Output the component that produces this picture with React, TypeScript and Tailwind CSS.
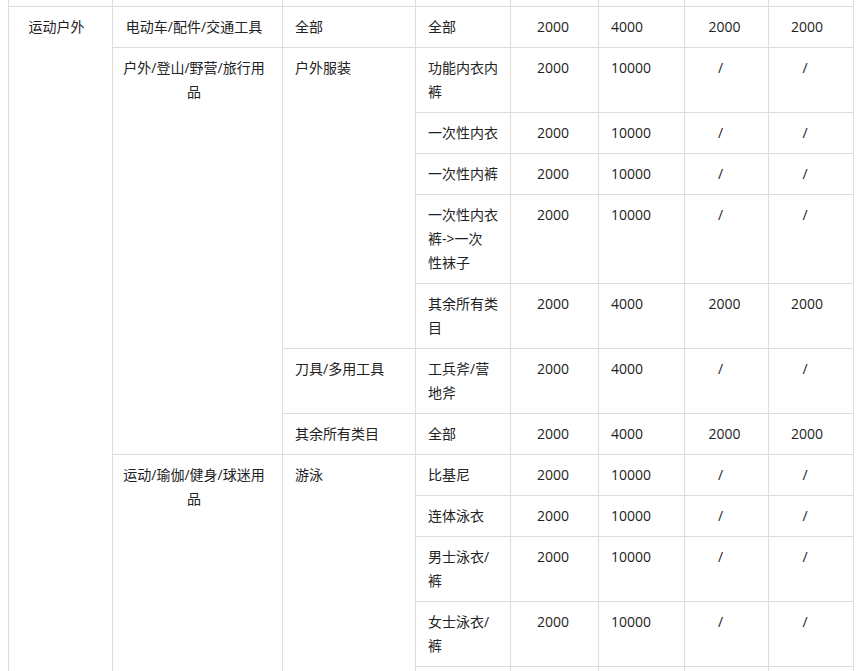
import React from 'react'

const td = 'border border-[#dddddd] align-top py-2'
const c1 = `${td} pl-[9px] pr-[17px] text-center`
const c2 = `${td} pl-[9px] pr-[16px] text-center`
const c3 = `${td} px-3 text-left`
const c4 = `${td} pl-3 pr-2 text-left`
const c5 = `${td} pl-2 pr-[11px] text-center`
const c6 = `${td} px-3 text-left`
const c7 = `${td} pl-3 pr-4 text-center`
const c7slash = `${td} pl-3 pr-6 text-center`
const c8 = `${td} pl-3 pr-5 text-center`
const c8slash = `${td} pl-3 pr-6 text-center`

function Limits({ base, max, p3, p4 }: { base: string; max: string; p3: string; p4: string }) {
  return (
    <>
      <td className={c5}>{base}</td>
      <td className={c6}>{max}</td>
      <td className={p3 === '/' ? c7slash : c7}>{p3}</td>
      <td className={p4 === '/' ? c8slash : c8}>{p4}</td>
    </>
  )
}

function Lines({ items }: { items: string[] }) {
  return (
    <>
      {items.map((t, i) => (
        <span key={i} className="block whitespace-nowrap">{t}</span>
      ))}
    </>
  )
}

export default function App() {
  return (
    <div className="h-[671px] w-[861px] overflow-hidden bg-white">
      <table className="ml-2 w-[845px] table-fixed border-collapse text-[14px] leading-6 text-[#222222] font-['Open_Sans','Noto_Sans_CJK_SC',sans-serif]">
        <colgroup>
          <col className="w-[104px]" />
          <col className="w-[170px]" />
          <col className="w-[133px]" />
          <col className="w-[95px]" />
          <col className="w-[88px]" />
          <col className="w-[86px]" />
          <col className="w-[84px]" />
          <col className="w-[85px]" />
        </colgroup>
        <tbody>
          {/* tail of the previous group, cut off at the top */}
          <tr>
            <td className="h-[6px] border-x border-[#dddddd] p-0" />
            <td className="h-[6px] border-x border-[#dddddd] p-0" />
            <td className="h-[6px] border-x border-[#dddddd] p-0" />
            <td className="h-[6px] border-x border-[#dddddd] p-0" />
            <td className="h-[6px] border-x border-[#dddddd] p-0" />
            <td className="h-[6px] border-x border-[#dddddd] p-0" />
            <td className="h-[6px] border-x border-[#dddddd] p-0" />
            <td className="h-[6px] border-x border-[#dddddd] p-0" />
          </tr>

          <tr>
            <td className={c1} rowSpan={13}>运动户外</td>
            <td className={c2}>电动车/配件/交通工具</td>
            <td className={c3}>全部</td>
            <td className={c4}>全部</td>
            <Limits base="2000" max="4000" p3="2000" p4="2000" />
          </tr>

          {/* 户外/登山/野营/旅行用品 */}
          <tr>
            <td className={c2} rowSpan={7}>
              <Lines items={['户外/登山/野营/旅行用', '品']} />
            </td>
            <td className={c3} rowSpan={5}>户外服装</td>
            <td className={c4}>
              <Lines items={['功能内衣内', '裤']} />
            </td>
            <Limits base="2000" max="10000" p3="/" p4="/" />
          </tr>
          <tr>
            <td className={c4}>一次性内衣</td>
            <Limits base="2000" max="10000" p3="/" p4="/" />
          </tr>
          <tr>
            <td className={c4}>一次性内裤</td>
            <Limits base="2000" max="10000" p3="/" p4="/" />
          </tr>
          <tr>
            <td className={c4}>
              <Lines items={['一次性内衣', '裤->一次', '性袜子']} />
            </td>
            <Limits base="2000" max="10000" p3="/" p4="/" />
          </tr>
          <tr>
            <td className={c4}>
              <Lines items={['其余所有类', '目']} />
            </td>
            <Limits base="2000" max="4000" p3="2000" p4="2000" />
          </tr>
          <tr>
            <td className={c3}>刀具/多用工具</td>
            <td className={c4}>
              <Lines items={['工兵斧/营', '地斧']} />
            </td>
            <Limits base="2000" max="4000" p3="/" p4="/" />
          </tr>
          <tr>
            <td className={c3}>其余所有类目</td>
            <td className={c4}>全部</td>
            <Limits base="2000" max="4000" p3="2000" p4="2000" />
          </tr>

          {/* 运动/瑜伽/健身/球迷用品 */}
          <tr>
            <td className={c2} rowSpan={5}>
              <Lines items={['运动/瑜伽/健身/球迷用', '品']} />
            </td>
            <td className={c3} rowSpan={5}>游泳</td>
            <td className={c4}>比基尼</td>
            <Limits base="2000" max="10000" p3="/" p4="/" />
          </tr>
          <tr>
            <td className={c4}>连体泳衣</td>
            <Limits base="2000" max="10000" p3="/" p4="/" />
          </tr>
          <tr>
            <td className={c4}>
              <Lines items={['男士泳衣/', '裤']} />
            </td>
            <Limits base="2000" max="10000" p3="/" p4="/" />
          </tr>
          <tr>
            <td className={c4}>
              <Lines items={['女士泳衣/', '裤']} />
            </td>
            <Limits base="2000" max="10000" p3="/" p4="/" />
          </tr>
          <tr>
            <td className={`${c4} h-[41px]`} />
            <td className={c5} />
            <td className={c6} />
            <td className={c7} />
            <td className={c8} />
          </tr>
        </tbody>
      </table>
    </div>
  )
}
